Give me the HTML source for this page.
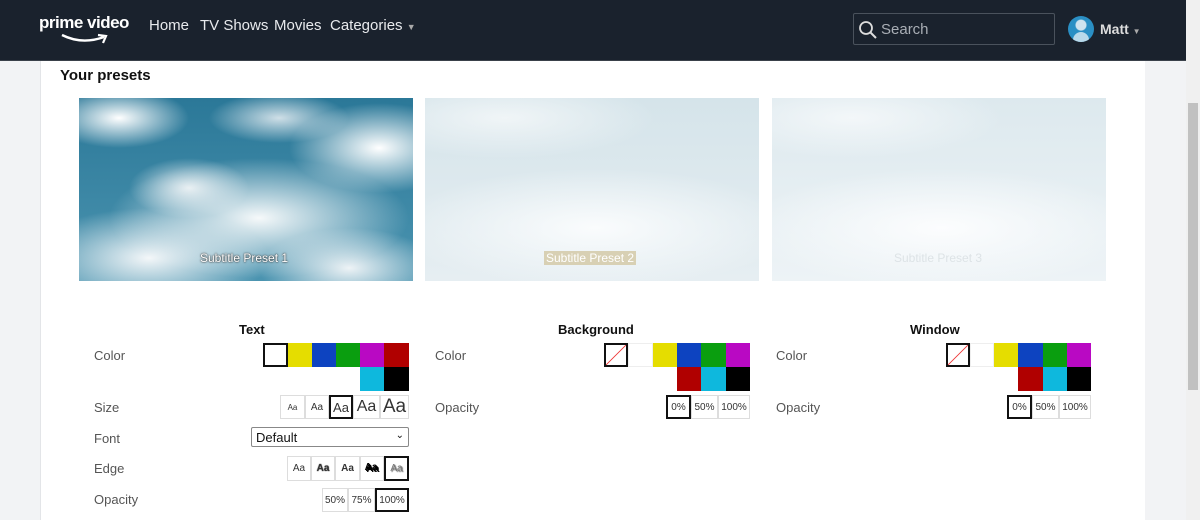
<!DOCTYPE html>
<html><head><meta charset="utf-8"><style>
*{box-sizing:border-box;margin:0;padding:0}
body{width:1200px;height:520px;overflow:hidden;background:#f2f3f5;font-family:"Liberation Sans",sans-serif;position:relative}
.hdr{position:absolute;left:0;top:0;width:1186px;height:61px;background:#1a222d;border-bottom:1px solid #3a414a}
.nav{position:absolute;top:17px;color:#e8eaed;font-size:15px}
.main{position:absolute;left:40px;top:61px;width:1105px;height:459px;background:#fff;border-left:1px solid #e3e5e8}
.sb{position:absolute;left:1186px;top:0;width:14px;height:520px;background:#f0f0f0}
.thumb{position:absolute;left:1188px;top:103px;width:10px;height:287px;background:#c1c1c1}
.abs{position:absolute}
.img{position:absolute;top:98px;height:183px;width:334px;overflow:hidden}
.cap{position:absolute;top:251px;font-size:12px;color:#fff;white-space:nowrap}
.lbl{position:absolute;font-size:13px;color:#555}
.h{position:absolute;top:322px;font-size:13px;font-weight:bold;color:#111}
.sw{position:absolute;width:24px;height:24px}
.bt{position:absolute;border:1px solid #ddd;background:#fff;color:#333;display:flex;align-items:center;justify-content:center;font-size:10px}
.sel{border:2px solid #111!important}
</style></head><body>
<div class="hdr">
 <div class="abs" style="left:39px;top:13px;color:#fff;font-size:17px;font-weight:bold;letter-spacing:-0.5px">prime video</div>
 <svg class="abs" style="left:60px;top:33px" width="50" height="12" viewBox="0 0 50 12"><path d="M2 2 Q22 12 44 4" stroke="#fff" stroke-width="2.4" fill="none"/><path d="M38 2 L46 3 L43 10" stroke="#fff" stroke-width="2.2" fill="none"/></svg>
 <div class="nav" style="left:149px">Home</div>
 <div class="nav" style="left:200px">TV Shows</div>
 <div class="nav" style="left:274px">Movies</div>
 <div class="nav" style="left:330px">Categories <span style="font-size:9px;color:#aaa">▼</span></div>
 <div class="abs" style="left:853px;top:13px;width:202px;height:32px;border:1px solid #4a525c;border-radius:2px"></div>
 <svg class="abs" style="left:858px;top:20px" width="20" height="20"><circle cx="8" cy="8" r="6" stroke="#ddd" stroke-width="1.8" fill="none"/><path d="M12.5 12.5 L18 18" stroke="#ddd" stroke-width="2"/></svg>
 <div class="abs" style="left:881px;top:21px;color:#a9aeb5;font-size:15px">Search</div>
 <div class="abs" style="left:1068px;top:16px;width:26px;height:26px;border-radius:50%;background:radial-gradient(circle at 50% 35%,#cfe3ef 0 5px,#2a8fc4 6px);overflow:hidden"><div style="position:absolute;left:5px;top:16px;width:16px;height:12px;border-radius:8px 8px 0 0;background:#b9d9ea"></div></div>
 <div class="abs" style="left:1100px;top:21px;color:#ddd;font-size:14px;font-weight:bold">Matt <span style="font-size:8px;color:#aaa">▼</span></div>
</div>
<div class="main"></div>
<div class="sb"></div><div class="thumb"></div>
<div class="abs" style="left:60px;top:67px;font-size:15px;font-weight:bold;color:#111">Your presets</div>

<div class="img" style="left:79px;background:radial-gradient(ellipse 70px 30px at 40px 20px,#fff,transparent),radial-gradient(ellipse 90px 45px at 300px 50px,#fff,transparent),radial-gradient(ellipse 150px 60px at 180px 120px,#f6f9fa,transparent),radial-gradient(ellipse 120px 50px at 70px 160px,#f4f7f9,transparent),radial-gradient(ellipse 90px 40px at 270px 170px,#eef3f6,transparent),radial-gradient(ellipse 60px 30px at 110px 90px,#e4ecf0,transparent),radial-gradient(ellipse 70px 25px at 200px 20px,#cfdfe7,transparent),linear-gradient(#2b7898,#4b94b0)"></div>
<div class="img" style="left:425px;background:radial-gradient(ellipse 200px 60px at 170px 130px,#fafcfd,transparent),radial-gradient(ellipse 150px 40px at 80px 20px,#f0f5f7,transparent),linear-gradient(#d5e4ea,#e6eef2)"></div>
<div class="img" style="left:772px;background:radial-gradient(ellipse 200px 60px at 170px 130px,#fcfdfe,transparent),radial-gradient(ellipse 150px 40px at 80px 20px,#f3f7f9,transparent),linear-gradient(#dde9ee,#edf3f6)"></div>
<div class="cap" style="left:200px;text-shadow:0 0 2px #333,0 0 1px #333">Subtitle Preset 1</div>
<div class="cap" style="left:544px;background:#d8d0b4;color:#fff;padding:0 2px">Subtitle Preset 2</div>
<div class="cap" style="left:894px;color:#dde3e6">Subtitle Preset 3</div>

<div class="h" style="left:239px">Text</div>
<div class="h" style="left:558px">Background</div>
<div class="h" style="left:910px">Window</div>

<div class="lbl" style="left:94px;top:348px">Color</div>
<div class="lbl" style="left:94px;top:400px">Size</div>
<div class="lbl" style="left:94px;top:431px">Font</div>
<div class="lbl" style="left:94px;top:461px">Edge</div>
<div class="lbl" style="left:94px;top:492px">Opacity</div>
<div class="lbl" style="left:435px;top:348px">Color</div>
<div class="lbl" style="left:435px;top:400px">Opacity</div>
<div class="lbl" style="left:776px;top:348px">Color</div>
<div class="lbl" style="left:776px;top:400px">Opacity</div>

<div class="sw sel" style="left:263px;top:343px;width:25px;background:#fff"></div>
<div class="sw" style="left:288px;top:343px;background:#e5dd00"></div>
<div class="sw" style="left:312px;top:343px;background:#0d43c0"></div>
<div class="sw" style="left:336px;top:343px;background:#0a9e0f"></div>
<div class="sw" style="left:360px;top:343px;background:#b909c3"></div>
<div class="sw" style="left:384px;top:343px;width:25px;background:#b00000"></div>
<div class="sw" style="left:360px;top:367px;background:#0eb8dd"></div>
<div class="sw" style="left:384px;top:367px;width:25px;background:#000"></div>
<div class="bt" style="left:280px;top:395px;width:25px;height:24px;font-size:8px">Aa</div>
<div class="bt" style="left:305px;top:395px;width:24px;height:24px;font-size:10px">Aa</div>
<div class="bt sel" style="left:329px;top:395px;width:24px;height:24px;font-size:13px">Aa</div>
<div class="bt" style="left:353px;top:395px;width:27px;height:24px;font-size:16px">Aa</div>
<div class="bt" style="left:380px;top:395px;width:29px;height:24px;font-size:19px">Aa</div>
<div class="abs" style="left:251px;top:427px;width:158px;height:20px;border:1px solid #888;border-radius:2px;font-size:13px;padding:2px 4px;color:#111">Default<span style="position:absolute;right:4px;top:2px;font-size:10px">⌄</span></div>
<div class="bt" style="left:287px;top:456px;width:24px;height:25px">Aa</div>
<div class="bt" style="left:311px;top:456px;width:24px;height:25px;font-weight:bold;text-shadow:0 0 1px #000">Aa</div>
<div class="bt" style="left:335px;top:456px;width:25px;height:25px;font-weight:bold">Aa</div>
<div class="bt" style="left:360px;top:456px;width:24px;height:25px;font-weight:bold;color:#000;text-shadow:1px 1px 0 #000,-1px -1px 0 #000">Aa</div>
<div class="bt sel" style="left:384px;top:456px;width:25px;height:25px;color:#777;text-shadow:1px 1px 1px #555">Aa</div>
<div class="bt" style="left:322px;top:488px;width:26px;height:24px">50%</div>
<div class="bt" style="left:348px;top:488px;width:27px;height:24px">75%</div>
<div class="bt sel" style="left:375px;top:488px;width:34px;height:24px">100%</div>

<svg class="sw sel" style="left:604px;top:343px;background:#fff" viewBox="0 0 24 24"><path d="M0 24 L24 0" stroke="#e33" stroke-width="1"/></svg>
<div class="sw" style="left:628px;top:343px;width:25px;background:#fff;border:1px solid #eee"></div>
<div class="sw" style="left:653px;top:343px;background:#e5dd00"></div>
<div class="sw" style="left:677px;top:343px;background:#0d43c0"></div>
<div class="sw" style="left:701px;top:343px;width:25px;background:#0a9e0f"></div>
<div class="sw" style="left:726px;top:343px;background:#b909c3"></div>
<div class="sw" style="left:677px;top:367px;background:#b00000"></div>
<div class="sw" style="left:701px;top:367px;width:25px;background:#0eb8dd"></div>
<div class="sw" style="left:726px;top:367px;background:#000"></div>
<div class="bt sel" style="left:666px;top:395px;width:25px;height:24px">0%</div>
<div class="bt" style="left:691px;top:395px;width:27px;height:24px">50%</div>
<div class="bt" style="left:718px;top:395px;width:32px;height:24px">100%</div>

<svg class="sw sel" style="left:946px;top:343px;background:#fff" viewBox="0 0 24 24"><path d="M0 24 L24 0" stroke="#e33" stroke-width="1"/></svg>
<div class="sw" style="left:970px;top:343px;background:#fff;border:1px solid #eee"></div>
<div class="sw" style="left:994px;top:343px;background:#e5dd00"></div>
<div class="sw" style="left:1018px;top:343px;width:25px;background:#0d43c0"></div>
<div class="sw" style="left:1043px;top:343px;background:#0a9e0f"></div>
<div class="sw" style="left:1067px;top:343px;background:#b909c3"></div>
<div class="sw" style="left:1018px;top:367px;width:25px;background:#b00000"></div>
<div class="sw" style="left:1043px;top:367px;background:#0eb8dd"></div>
<div class="sw" style="left:1067px;top:367px;background:#000"></div>
<div class="bt sel" style="left:1007px;top:395px;width:25px;height:24px">0%</div>
<div class="bt" style="left:1032px;top:395px;width:27px;height:24px">50%</div>
<div class="bt" style="left:1059px;top:395px;width:32px;height:24px">100%</div>
</body></html>
